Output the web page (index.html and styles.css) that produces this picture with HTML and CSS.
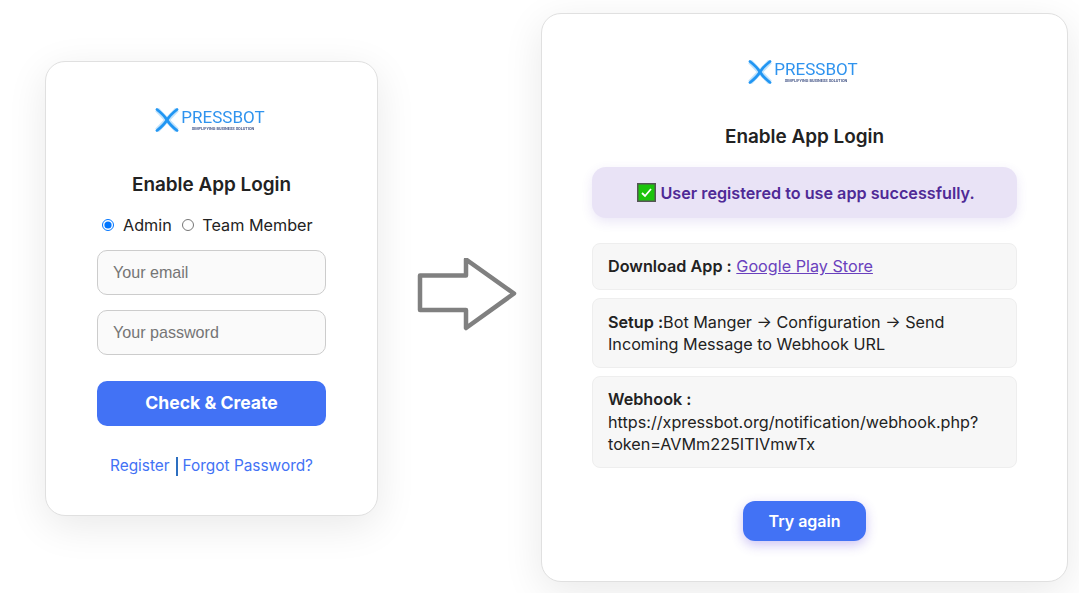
FILE: index.html
```html
<!DOCTYPE html>
<html lang="en">
<head>
    <meta charset="UTF-8">
    <meta name="viewport" content="width=device-width, initial-scale=1.0">
    <title>Enable App Login</title>
    <link rel="stylesheet" href="styles.css">
</head>
<body>
    <!-- Login form -->
    <div class="card card-login">
        <div class="logo">
            <svg class="logo-mark" width="24" height="24" viewBox="0 0 24 24" aria-hidden="true">
                <path class="logo-glow" d="M2 1.5 L22 22.5 M22 1.5 L2 22.5"/>
                <path class="logo-stroke" d="M2 1.5 Q9 7 12 12 Q15 17 22 22.5 M22 1.5 Q15 7 12 12 Q9 17 2 22.5"/>
            </svg>
            <div class="logo-text">
                <div class="logo-name">PRESSBOT</div>
                <div class="logo-tag">SIMPLIFYING BUSINESS SOLUTION</div>
            </div>
        </div>
        <h2 class="title">Enable App Login</h2>
        <div class="role-row">
            <label class="role"><input type="radio" name="role" checked> Admin</label>
            <label class="role"><input type="radio" name="role"> Team Member</label>
        </div>
        <input class="field" type="text" placeholder="Your email">
        <input class="field" type="password" placeholder="Your password">
        <button class="btn-submit">Check &amp; Create</button>
        <div class="links">
            <a href="#">Register</a>
            <span class="links-sep"></span>
            <a href="#">Forgot Password?</a>
        </div>
    </div>

    <!-- Arrow -->
    <svg class="arrow" width="100" height="74" viewBox="0 0 100 74" aria-hidden="true">
        <path d="M3 17.5 H49 V1.5 L97 35.5 L49 70 V52 H3 Z"/>
    </svg>

    <!-- Result -->
    <div class="card card-result">
        <div class="logo">
            <svg class="logo-mark" width="24" height="24" viewBox="0 0 24 24" aria-hidden="true">
                <path class="logo-glow" d="M2 1.5 L22 22.5 M22 1.5 L2 22.5"/>
                <path class="logo-stroke" d="M2 1.5 Q9 7 12 12 Q15 17 22 22.5 M22 1.5 Q15 7 12 12 Q9 17 2 22.5"/>
            </svg>
            <div class="logo-text">
                <div class="logo-name">PRESSBOT</div>
                <div class="logo-tag">SIMPLIFYING BUSINESS SOLUTION</div>
            </div>
        </div>
        <h2 class="title">Enable App Login</h2>
        <div class="alert">
            <svg class="check" width="19" height="19" viewBox="0 0 19 19" aria-hidden="true">
                <rect x="0.75" y="0.75" width="17.5" height="17.5" fill="#1cc40c" stroke="#555" stroke-width="1.5"/>
                <path d="M5 10 L8 13 L14 6" fill="none" stroke="#fff" stroke-width="1.8"/>
            </svg>
            <span>User registered to use app successfully.</span>
        </div>
        <div class="info-row info-first"><b>Download App :</b> <a href="#">Google Play Store</a></div>
        <div class="info-row"><b>Setup :</b>Bot Manger → Configuration → Send Incoming Message to Webhook URL</div>
        <div class="info-row"><b>Webhook :</b><br>https://xpressbot.org/notification/webhook.php?token=AVMm225ITIVmwTx</div>
        <button class="btn-retry">Try again</button>
    </div>
</body>
</html>
```

FILE: styles.css
```css
/* Global settings */
:root {
    --color-blue: #4272f5;
    --color-text: #222;
    --font-default: Inter, 'Liberation Sans', Arial, sans-serif;
}

* {
    box-sizing: border-box;
}

body {
    margin: 0;
    height: 593px;
    overflow: hidden;
    display: flex;
    align-items: flex-start;
    padding-left: 45px;
    background-color: #fff;
    color: var(--color-text);
    font-family: var(--font-default);
    font-size: 16.2px;
}

/* Cards */
.card {
    display: flex;
    flex-direction: column;
    background-color: #fff;
    border: 1px solid #e0e0e0;
    border-radius: 20px;
    box-shadow: 0 10px 40px rgba(0, 0, 0, 0.09);
}

.card-login {
    width: 333px;
    height: 455px;
    margin-top: 61px;
    padding: 44px 51px 0;
}

.card-result {
    width: 527px;
    height: 569px;
    margin-top: 13px;
    padding: 44px 50px 0;
}

/* Logo */
.logo {
    display: flex;
    justify-content: center;
    align-items: center;
    gap: 2px;
    height: 28px;
    padding-right: 3px;
    color: #2f93ee;
    filter: blur(0.35px);
}

.logo-mark {
    flex: none;
}

.logo-glow {
    fill: none;
    stroke: #8ecbf8;
    stroke-width: 5;
    opacity: 0.55;
}

.logo-stroke {
    fill: none;
    stroke: #2196f3;
    stroke-width: 2.8;
    stroke-linecap: round;
}

.logo-text {
    display: flex;
    flex-direction: column;
    align-items: center;
}

.logo-name {
    font-family: Roboto, sans-serif;
    font-size: 17px;
    line-height: 17px;
}

.logo-tag {
    font-family: Roboto, sans-serif;
    font-size: 3.9px;
    font-weight: 700;
    line-height: 5px;
    color: #4a5a8a;
}

.title {
    margin: 0;
    font-size: 18.9px;
    font-weight: 600;
    line-height: 24px;
    text-align: center;
}

.card-login .title {
    margin-top: 39px;
}

.card-result .title {
    margin-top: 39px;
}

/* Login form */
.role-row {
    display: flex;
    justify-content: center;
    gap: 10px;
    margin: 16px -10px 13px -18px;
    line-height: 24px;
}

.role input {
    margin: 0 4px 0 0;
    width: 12px;
    height: 12px;
}

.field {
    display: block;
    width: 100%;
    height: 45px;
    margin-bottom: 15px;
    padding: 0 15px;
    background-color: #fafafa;
    border: 1px solid #ccc;
    border-radius: 10px;
    font-family: 'Liberation Sans', Arial, sans-serif;
    font-size: 16.1px;
}

.field::placeholder {
    color: #757575;
}

.btn-submit {
    height: 45px;
    margin-top: 11px;
    padding-bottom: 3px;
    border: 0;
    border-radius: 10px;
    background-color: var(--color-blue);
    color: #fff;
    font-family: var(--font-default);
    font-size: 17.6px;
    font-weight: 700;
    cursor: pointer;
}

.links {
    display: flex;
    justify-content: center;
    align-items: center;
    gap: 5px;
    margin-top: 30px;
    font-size: 15.4px;
    line-height: 20px;
}

.links a {
    color: var(--color-blue);
    text-decoration: none;
}

.links-sep {
    width: 2px;
    height: 19px;
    margin-left: 1px;
    background-color: #2d6fc0;
}

/* Arrow */
.arrow {
    flex: none;
    margin: 258px 0 0 39px;
    margin-right: 24px;
}

.arrow path {
    fill: #fff;
    stroke: #808080;
    stroke-width: 4.5;
    stroke-linejoin: round;
}

/* Result */
.alert {
    display: flex;
    justify-content: center;
    align-items: center;
    gap: 4px;
    height: 51px;
    margin-top: 18px;
    padding-left: 3px;
    border-radius: 14px;
    background-color: #e9e3f6;
    box-shadow: 0 4px 12px rgba(90, 60, 190, 0.12);
    color: #4f2a96;
    font-weight: 600;
}

.check {
    flex: none;
}

.info-row {
    margin-bottom: 8px;
    padding: 11.4px 15px;
    background-color: #f7f7f7;
    border: 1px solid #eee;
    border-radius: 8px;
    line-height: 22.4px;
    overflow-wrap: anywhere;
}

.info-first {
    margin-top: 25px;
}

.info-row b {
    font-weight: 600;
}

.info-row a {
    color: #6a41bd;
}

.btn-retry {
    align-self: center;
    width: 123px;
    height: 40px;
    margin-top: 25px;
    border: 0;
    border-radius: 12px;
    background-color: var(--color-blue);
    box-shadow: 0 4px 12px rgba(90, 60, 220, 0.3);
    color: #fff;
    font-family: var(--font-default);
    font-size: 16px;
    font-weight: 600;
    cursor: pointer;
}
```
